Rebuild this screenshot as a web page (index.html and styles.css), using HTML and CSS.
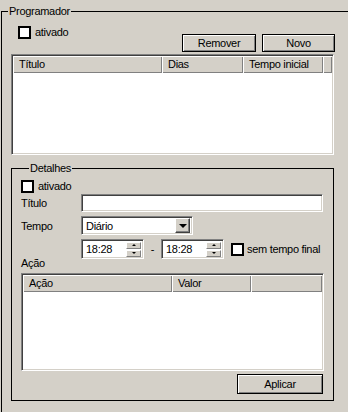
FILE: index.html
```html
<!DOCTYPE html>
<html lang="pt">
<head>
    <meta charset="UTF-8">
    <title>Programador</title>
    <link rel="stylesheet" href="styles.css">
</head>
<body>
    <!-- PROGRAMADOR -->
    <fieldset class="group group-main">
        <legend>Programador</legend>
        <div class="main-body">
            <div class="top-row">
                <label class="check"><input type="checkbox">ativado</label>
                <div class="buttons">
                    <button class="btn btn-remove">Remover</button>
                    <button class="btn btn-novo">Novo</button>
                </div>
            </div>

            <div class="list list-main">
                <div class="list-head">
                    <div class="col col-titulo">Título</div>
                    <div class="col col-dias">Dias</div>
                    <div class="col col-tempo">Tempo inicial</div>
                    <div class="col col-rest"></div>
                </div>
            </div>

            <!-- DETALHES -->
            <fieldset class="group group-details">
                <legend>Detalhes</legend>
                <label class="check check-details"><input type="checkbox">ativado</label>

                <div class="field-row row-titulo">
                    <span class="field-label">Título</span>
                    <div class="textbox"></div>
                </div>

                <div class="field-row row-tempo">
                    <span class="field-label">Tempo</span>
                    <div class="combo">
                        <span class="combo-text">Diário</span>
                        <span class="combo-btn"><span class="arrow-down"></span></span>
                    </div>
                </div>

                <div class="field-row row-time">
                    <div class="spin">
                        <span class="spin-text">18:28</span>
                        <span class="spin-btns">
                            <span class="spin-btn"><span class="tri-up"></span></span>
                            <span class="spin-btn"><span class="tri-down"></span></span>
                        </span>
                    </div>
                    <span class="dash">-</span>
                    <div class="spin">
                        <span class="spin-text">18:28</span>
                        <span class="spin-btns">
                            <span class="spin-btn"><span class="tri-up"></span></span>
                            <span class="spin-btn"><span class="tri-down"></span></span>
                        </span>
                    </div>
                    <label class="check check-end"><input type="checkbox">sem tempo final</label>
                </div>

                <div class="acao-label">Ação</div>

                <div class="list list-acao">
                    <div class="list-head">
                        <div class="col col-acao">Ação</div>
                        <div class="col col-valor">Valor</div>
                        <div class="col col-rest"></div>
                    </div>
                </div>

                <div class="apply-row">
                    <button class="btn btn-apply">Aplicar</button>
                </div>
            </fieldset>
        </div>
    </fieldset>
</body>
</html>
```

FILE: styles.css
```css
body {
    margin: 0;
    background-color: #d4d0c8;
    font-family: "Liberation Sans", Arial, sans-serif;
    font-size: 11px;
    letter-spacing: -0.3px;
    color: #000;
}

/* group boxes */
.group {
    margin: 0;
    padding: 0;
    border: 1px solid #000;
    min-width: 0;
    box-sizing: border-box;
}
.group legend {
    padding: 0 1px;
    line-height: 12px;
    font-size: 11px;
}
/* the outer box runs on past the window, so no right/bottom edge */
.group-main {
    margin: 5px 0 0 1px;
    width: 347px;
    height: 407px;
    border-right: none;
    border-bottom: none;
}
.group-main legend {
    margin-left: 6px;
}
.group-details {
    margin-top: 7px;
    width: 323px;
    padding: 0 9px 6px 9px;
}
.group-details legend {
    margin-left: 8px;
}

.main-body {
    padding-left: 9px;
    width: 324px;
}

/* checkbox */
.check {
    display: flex;
    align-items: center;
    line-height: 13px;
    white-space: nowrap;
}
.check input {
    appearance: none;
    -webkit-appearance: none;
    margin: 0 4px 0 0;
    width: 13px;
    height: 13px;
    border: 2px solid #000;
    background-color: #fff;
    box-sizing: border-box;
    flex-shrink: 0;
}

.top-row {
    display: flex;
    justify-content: space-between;
    margin-top: 9px;
    padding-left: 7px;
}
.top-row .check {
    align-self: flex-start;
}
.buttons {
    display: flex;
    gap: 6px;
    margin-top: 8px;
}

/* buttons */
.btn {
    font-family: "Liberation Sans", Arial, sans-serif;
    font-size: 11px;
    letter-spacing: -0.3px;
    color: #000;
    background-color: #d4d0c8;
    border: 1px solid #000;
    box-shadow: inset 1px 1px 0 #fff, inset -1px -1px 0 #808080;
    padding: 0;
    height: 18px;
    line-height: 14px;
}
.btn-remove {
    width: 74px;
}
.btn-novo {
    width: 73px;
}
.btn-apply {
    width: 86px;
    height: 20px;
}

/* list views */
.list {
    background-color: #fff;
    border-top: 1px solid #808080;
    border-left: 1px solid #808080;
    border-right: 1px solid #fff;
    border-bottom: 1px solid #fff;
    box-shadow: inset 1px 1px 0 #404040, inset -1px -1px 0 #d4d0c8;
    box-sizing: border-box;
    padding: 1px;
}
.list-main {
    margin-top: 2px;
    width: 323px;
    height: 101px;
}
.list-acao {
    margin-top: 4px;
    width: 303px;
    height: 98px;
}
.list-head {
    display: flex;
    height: 17px;
}
.col {
    background-color: #d4d0c8;
    box-shadow: inset 1px 1px 0 #fff, inset -1px -1px 0 #808080;
    line-height: 17px;
    padding-left: 6px;
    box-sizing: border-box;
    white-space: nowrap;
}
.col-titulo {
    width: 149px;
}
.col-dias {
    width: 81px;
}
.col-tempo {
    width: 80px;
}
.col-acao {
    width: 149px;
}
.col-valor {
    width: 79px;
}
.col-rest {
    flex: 1;
}

/* detalhes rows */
.check-details {
    margin-top: 6px;
}
.field-row {
    display: flex;
    align-items: center;
}
.field-label {
    width: 60px;
    flex-shrink: 0;
}
.row-titulo {
    margin-top: 1px;
}
.row-tempo {
    margin-top: 4px;
}
.row-time {
    margin-top: 4px;
    padding-left: 60px;
}

.textbox,
.combo,
.spin {
    background-color: #fff;
    border-top: 1px solid #808080;
    border-left: 1px solid #808080;
    border-right: 1px solid #fff;
    border-bottom: 1px solid #fff;
    box-shadow: inset 1px 1px 0 #404040, inset -1px -1px 0 #d4d0c8;
    box-sizing: border-box;
    flex-shrink: 0;
}
.textbox {
    width: 242px;
    height: 18px;
}

.combo {
    width: 112px;
    height: 19px;
    display: flex;
    align-items: center;
    padding: 2px;
}
.combo-text {
    flex: 1;
    padding-left: 2px;
}
.combo-btn {
    width: 15px;
    height: 15px;
    background-color: #d4d0c8;
    border: 1px solid;
    border-color: #fff #404040 #404040 #fff;
    box-shadow: inset -1px -1px 0 #808080;
    box-sizing: border-box;
    display: flex;
    align-items: center;
    justify-content: center;
}
.arrow-down {
    width: 0;
    height: 0;
    border-left: 4px solid transparent;
    border-right: 4px solid transparent;
    border-top: 4px solid #000;
}

.spin {
    width: 63px;
    height: 20px;
    display: flex;
    align-items: center;
    padding: 2px 2px 2px 0;
}
.spin-text {
    flex: 1;
    padding-left: 4px;
}
.spin-btns {
    display: flex;
    flex-direction: column;
    gap: 1px;
    width: 15px;
}
.spin-btn {
    height: 7px;
    background-color: #d4d0c8;
    border: 1px solid;
    border-color: #fff #808080 #808080 #fff;
    box-sizing: border-box;
    display: flex;
    align-items: center;
    justify-content: center;
}
.tri-up {
    width: 0;
    height: 0;
    border-left: 2px solid transparent;
    border-right: 2px solid transparent;
    border-bottom: 2px solid #000;
}
.tri-down {
    width: 0;
    height: 0;
    border-left: 2px solid transparent;
    border-right: 2px solid transparent;
    border-top: 2px solid #000;
}
.dash {
    width: 17px;
    text-align: center;
    flex-shrink: 0;
}
.check-end {
    margin-left: 7px;
}
.check-end input {
    margin-right: 3px;
}

.acao-label {
    margin-top: -2px;
    line-height: 12px;
}

.apply-row {
    display: flex;
    justify-content: flex-end;
    margin-top: 3px;
    padding-right: 1px;
}
```
